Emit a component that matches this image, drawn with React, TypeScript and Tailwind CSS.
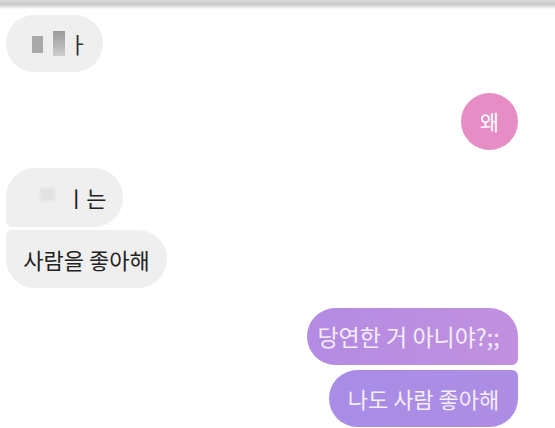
import React from "react";

const kr = "font-['Noto_Sans_CJK_KR',sans-serif]";

function GrayBubble({ className = "", children }: { className?: string; children: React.ReactNode }) {
    return (
        <div className={`flex items-center bg-[#efefef] text-[#222] text-[22px] ${className}`}>
            {children}
        </div>
    );
}

function PurpleBubble({ className = "", children }: { className?: string; children: React.ReactNode }) {
    return (
        <div className={`self-end flex items-center justify-center text-[#f4eefb] ${className}`}>
            {children}
        </div>
    );
}

export default function App() {
    return (
        <div className={`w-[555px] h-[428px] bg-white overflow-hidden ${kr}`}>
            {/* top shade */}
            <div className="h-[9px] bg-gradient-to-b from-[#d9d9d9] via-[#c9c9c9] to-white" />

            <div className="flex flex-col pl-[6px] pr-[37px]">
                {/* censored first message */}
                <GrayBubble className="mt-[6px] h-[57px] w-[97px] rounded-[29px] pl-[26px]">
                    <div className="w-[11px] h-[17px] bg-[#a9a9a9] blur-[0.5px] mt-[2px]" />
                    <div className="ml-[10px] w-[12px] h-[25px] bg-gradient-to-b from-[#999] to-[#cdcdcd] blur-[0.5px]" />
                    <span className="ml-[3px] text-[#333]">ㅏ</span>
                </GrayBubble>

                {/* pink circle */}
                <div className="self-end mt-[21px] w-[57px] h-[57px] rounded-full bg-[#e68dc5] flex items-center justify-center text-white text-[21px]">
                    왜
                </div>

                <GrayBubble className="mt-[18px] h-[59px] w-[117px] rounded-[29px] rounded-bl-[6px] pl-[34px]">
                    <div className="w-[15px] h-[13px] bg-[#e2e2e2] blur-[1px] mb-[6px]" />
                    <span className="ml-[11px]">ㅣ는</span>
                </GrayBubble>

                <GrayBubble className="mt-[3px] h-[58px] w-[161px] rounded-[29px] rounded-tl-[6px] justify-center">
                    사람을 좋아해
                </GrayBubble>

                <PurpleBubble className="mt-[20px] h-[57px] w-[211px] pr-[8px] text-[23px] rounded-[29px] rounded-br-[6px] bg-gradient-to-r from-[#b38be3] to-[#c290df]">
                    당연한 거 아니야?;;
                </PurpleBubble>

                <PurpleBubble className="mt-[5px] h-[57px] w-[189px] text-[22px] rounded-[29px] rounded-tr-[6px] bg-gradient-to-r from-[#a88ce6] to-[#ae8de4]">
                    나도 사람 좋아해
                </PurpleBubble>
            </div>
        </div>
    );
}
